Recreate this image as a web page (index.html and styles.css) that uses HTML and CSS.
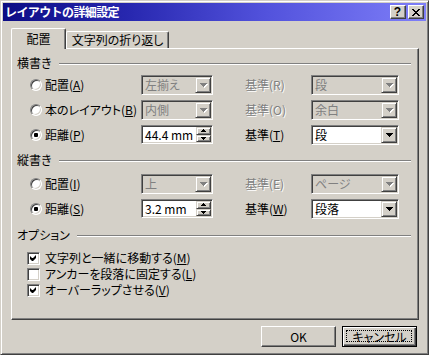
FILE: index.html
```html
<!DOCTYPE html>
<html lang="ja">
<head>
<meta charset="utf-8">
<title>レイアウトの詳細設定</title>
<link rel="stylesheet" href="styles.css">
</head>
<body>
<div class="window">
  <div class="titlebar">
    <span class="title">レイアウトの詳細設定</span>
    <div class="caption-btns">
      <span class="cap-btn help">?</span>
      <span class="cap-btn close"><svg width="8" height="7" viewBox="0 0 8 7"><path d="M0 0h2v1h1v1h2V1h1V0h2v1H7v1H6v1H5v1h1v1h1v1h1v1H6V6H5V5H3v1H2v1H0V6h1V5h1V4h1V3H2V2H1V1H0z" fill="#000"/></svg></span>
    </div>
  </div>
  <div class="content">
    <div class="tabs">
      <div class="tab active">配置</div>
      <div class="tab">文字列の折り返し</div>
    </div>
    <div class="panel">
      <div class="group-head"><span>横書き</span><span class="etch"></span></div>
      <div class="rows rows-h">
        <div class="row">
          <div class="opt"><span class="radio"></span><span>配置(<u>A</u>)</span></div>
          <div class="combo dis"><span class="val">左揃え</span><span class="drop"><svg width="7" height="4" viewBox="0 0 7 4"><path d="M0 0h7v1H6v1H5v1H4v1H3V3H2V2H1V1H0z"/></svg></span></div>
          <span class="ref dis">基準(R)</span>
          <div class="combo wide dis"><span class="val">段</span><span class="drop"><svg width="7" height="4" viewBox="0 0 7 4"><path d="M0 0h7v1H6v1H5v1H4v1H3V3H2V2H1V1H0z"/></svg></span></div>
        </div>
        <div class="row">
          <div class="opt"><span class="radio"></span><span>本のレイアウト(<u>B</u>)</span></div>
          <div class="combo dis"><span class="val">内側</span><span class="drop"><svg width="7" height="4" viewBox="0 0 7 4"><path d="M0 0h7v1H6v1H5v1H4v1H3V3H2V2H1V1H0z"/></svg></span></div>
          <span class="ref dis">基準(O)</span>
          <div class="combo wide dis"><span class="val">余白</span><span class="drop"><svg width="7" height="4" viewBox="0 0 7 4"><path d="M0 0h7v1H6v1H5v1H4v1H3V3H2V2H1V1H0z"/></svg></span></div>
        </div>
        <div class="row">
          <div class="opt"><span class="radio on"></span><span>距離(<u>P</u>)</span></div>
          <div class="spin"><span class="val">44.4 mm</span><span class="spin-btns"><span class="sb"><svg width="5" height="3" viewBox="0 0 5 3"><path d="M2 0h1v1h1v1h1v1H0V2h1V1h1z"/></svg></span><span class="sb"><svg width="5" height="3" viewBox="0 0 5 3"><path d="M0 0h5v1H4v1H3v1H2V2H1V1H0z"/></svg></span></span></div>
          <span class="ref">基準(<u>T</u>)</span>
          <div class="combo wide"><span class="val">段</span><span class="drop"><svg width="7" height="4" viewBox="0 0 7 4"><path d="M0 0h7v1H6v1H5v1H4v1H3V3H2V2H1V1H0z"/></svg></span></div>
        </div>
      </div>

      <div class="group-head head-v"><span>縦書き</span><span class="etch"></span></div>
      <div class="rows rows-v">
        <div class="row">
          <div class="opt"><span class="radio"></span><span>配置(<u>I</u>)</span></div>
          <div class="combo dis"><span class="val">上</span><span class="drop"><svg width="7" height="4" viewBox="0 0 7 4"><path d="M0 0h7v1H6v1H5v1H4v1H3V3H2V2H1V1H0z"/></svg></span></div>
          <span class="ref dis">基準(E)</span>
          <div class="combo wide dis"><span class="val">ページ</span><span class="drop"><svg width="7" height="4" viewBox="0 0 7 4"><path d="M0 0h7v1H6v1H5v1H4v1H3V3H2V2H1V1H0z"/></svg></span></div>
        </div>
        <div class="row">
          <div class="opt"><span class="radio on"></span><span>距離(<u>S</u>)</span></div>
          <div class="spin"><span class="val">3.2 mm</span><span class="spin-btns"><span class="sb"><svg width="5" height="3" viewBox="0 0 5 3"><path d="M2 0h1v1h1v1h1v1H0V2h1V1h1z"/></svg></span><span class="sb"><svg width="5" height="3" viewBox="0 0 5 3"><path d="M0 0h5v1H4v1H3v1H2V2H1V1H0z"/></svg></span></span></div>
          <span class="ref">基準(<u>W</u>)</span>
          <div class="combo wide"><span class="val">段落</span><span class="drop"><svg width="7" height="4" viewBox="0 0 7 4"><path d="M0 0h7v1H6v1H5v1H4v1H3V3H2V2H1V1H0z"/></svg></span></div>
        </div>
      </div>

      <div class="group-head head-o"><span>オプション</span><span class="etch"></span></div>
      <div class="checks">
        <div class="check-row"><span class="cbox"><svg width="7" height="7" viewBox="0 0 7 7"><path d="M6 0v3L3 6H2L0 4V1l2 2h1z"/></svg></span><span>文字列と一緒に移動する(<u>M</u>)</span></div>
        <div class="check-row"><span class="cbox"></span><span>アンカーを段落に固定する(<u>L</u>)</span></div>
        <div class="check-row"><span class="cbox"><svg width="7" height="7" viewBox="0 0 7 7"><path d="M6 0v3L3 6H2L0 4V1l2 2h1z"/></svg></span><span>オーバーラップさせる(<u>V</u>)</span></div>
      </div>
    </div>
    <div class="btn-row">
      <div class="btn">OK</div>
      <div class="btn focus">キャンセル</div>
    </div>
  </div>
</div>
</body>
</html>
```

FILE: styles.css
```css
* { box-sizing: border-box; }
html, body { margin: 0; padding: 0; }
body {
  width: 429px;
  height: 355px;
  overflow: hidden;
  background: #d4d0c8;
  font-family: "Noto Sans CJK JP", "Noto Sans", sans-serif;
  font-size: 12px;
  line-height: 14px;
  color: #000;
  font-feature-settings: "palt";
}
svg { display: block; }

.window {
  width: 429px;
  height: 355px;
  border: 1px solid;
  border-color: #d4d0c8 #404040 #404040 #d4d0c8;
  box-shadow: inset 1px 1px #fff, inset -1px -1px #808080;
  padding: 2px;
  display: flex;
  flex-direction: column;
}

/* title bar */
.titlebar {
  flex: none;
  height: 18px;
  background: linear-gradient(to right, #0c0c84 0%, #2828b0 30%, #5252dc 62%, #7e7ef8 100%);
  display: flex;
  align-items: center;
  justify-content: space-between;
  padding: 0 2px;
}
.title {
  color: #fff;
  font-weight: bold;
  font-feature-settings: normal;
  letter-spacing: -0.6px;
  white-space: nowrap;
  line-height: 18px;
}
.caption-btns { display: flex; gap: 2px; }
.cap-btn {
  width: 16px;
  height: 14px;
  background: #d4d0c8;
  border: 1px solid;
  border-color: #fff #404040 #404040 #fff;
  box-shadow: inset -1px -1px #808080;
  display: flex;
  align-items: center;
  justify-content: center;
}
.cap-btn.help {
  font-family: "Liberation Sans", sans-serif;
  font-weight: bold;
  font-size: 12px;
  line-height: 12px;
  padding-right: 1px;
}

/* content */
.content {
  flex: 1;
  display: flex;
  flex-direction: column;
  padding: 7px 7px 0 8px;
}

.tabs {
  flex: none;
  height: 20px;
  display: flex;
  align-items: flex-end;
  position: relative;
  z-index: 1;
}
.tab {
  width: 103px;
  height: 17px;
  background: #d4d0c8;
  border: 1px solid;
  border-bottom: none;
  border-color: #fff #404040 #404040 #fff;
  box-shadow: inset -1px 0 #808080;
  border-top-left-radius: 2px;
  border-top-right-radius: 2px;
  text-align: center;
  line-height: 16px;
  white-space: nowrap;
}
.tab.active {
  width: 55px;
  height: 21px;
  margin-bottom: -1px;
  line-height: 19px;
}

.panel {
  flex: none;
  height: 272px;
  border: 1px solid;
  border-color: #fff #404040 #404040 #fff;
  box-shadow: inset -1px -1px #808080;
  padding: 7px 7px 0 5px;
}

.group-head {
  display: flex;
  align-items: center;
  height: 14px;
}
.group-head .etch {
  flex: 1;
  height: 2px;
  margin: 2px 0 0 7px;
  border-top: 1px solid #808080;
  border-bottom: 1px solid #fff;
}
.head-v { margin-top: 6px; }
.head-o { margin-top: 7px; }

.rows { padding-left: 13px; }
.rows-h { margin-top: 2px; }
.rows-v { margin-top: 4px; }
.row {
  height: 25px;
  display: grid;
  grid-template-columns: 111px 104px 66px 88px;
  align-items: center;
}
.opt {
  display: flex;
  align-items: center;
  gap: 3px;
  white-space: nowrap;
}
.radio {
  position: relative;
  width: 12px;
  height: 12px;
  border-radius: 50%;
  border: 1px solid;
  border-color: #808080 #fff #fff #808080;
  box-shadow: inset 1px 1px #404040, inset -1px -1px #d4d0c8;
  background: #fff;
}
.radio.on::after {
  content: "";
  position: absolute;
  left: 3px;
  top: 3px;
  width: 4px;
  height: 4px;
  border-radius: 1px;
  background: #000;
}
u { text-decoration: underline; text-underline-offset: 1px; }

.ref { white-space: nowrap; }
.ref.dis { color: #808080; text-shadow: 1px 1px 0 #fff; }

.combo, .spin {
  width: 72px;
  height: 20px;
  display: flex;
  align-items: stretch;
  border: 1px solid;
  border-color: #808080 #fff #fff #808080;
  box-shadow: inset 1px 1px #404040, inset -1px -1px #d4d0c8;
  padding: 1px;
  background: #fff;
}
.combo.wide { width: 88px; }
.combo.dis { background: #d4d0c8; }
.val {
  flex: 1;
  padding-left: 2px;
  line-height: 16px;
  white-space: nowrap;
  overflow: hidden;
}
.combo.dis .val { color: #808080; }
.drop {
  flex: none;
  width: 16px;
  background: #d4d0c8;
  border: 1px solid;
  border-color: #d4d0c8 #404040 #404040 #d4d0c8;
  box-shadow: inset 1px 1px #fff, inset -1px -1px #808080;
  display: flex;
  align-items: center;
  justify-content: center;
  padding-top: 1px;
}
.drop svg { fill: #000; }
.combo.dis .drop svg { fill: #808080; filter: drop-shadow(1px 1px 0 #fff); }

.spin { height: 19px; }
.spin .val { line-height: 15px; }
.spin-btns {
  flex: none;
  width: 15px;
  display: flex;
  flex-direction: column;
}
.sb {
  flex: 1;
  background: #d4d0c8;
  border: 1px solid;
  border-color: #d4d0c8 #404040 #404040 #d4d0c8;
  box-shadow: inset 1px 1px #fff, inset -1px -1px #808080;
  display: flex;
  align-items: center;
  justify-content: center;
}
.sb svg { fill: #000; }

.checks {
  margin-top: 8px;
  padding-left: 10px;
}
.check-row {
  height: 16px;
  display: flex;
  align-items: center;
  gap: 5px;
  white-space: nowrap;
}
.cbox {
  width: 13px;
  height: 13px;
  flex: none;
  border: 1px solid;
  border-color: #808080 #fff #fff #808080;
  box-shadow: inset 1px 1px #404040, inset -1px -1px #d4d0c8;
  background: #fff;
  display: flex;
  align-items: center;
  justify-content: center;
}
.cbox svg { fill: #000; }

.btn-row {
  flex: none;
  margin-top: 6px;
  display: flex;
  justify-content: flex-end;
  gap: 6px;
  padding-right: 2px;
}
.btn {
  width: 75px;
  height: 21px;
  background: #d4d0c8;
  border: 1px solid;
  border-color: #fff #404040 #404040 #fff;
  box-shadow: inset -1px -1px #808080;
  display: flex;
  align-items: center;
  justify-content: center;
  position: relative;
}
.btn.focus {
  border-color: #000;
  box-shadow: inset 1px 1px #fff, inset -1px -1px #404040, inset -2px -2px #808080;
}
.btn.focus::after {
  content: "";
  position: absolute;
  left: 3px;
  top: 3px;
  right: 4px;
  bottom: 4px;
  border: 1px dotted #000;
}
```
